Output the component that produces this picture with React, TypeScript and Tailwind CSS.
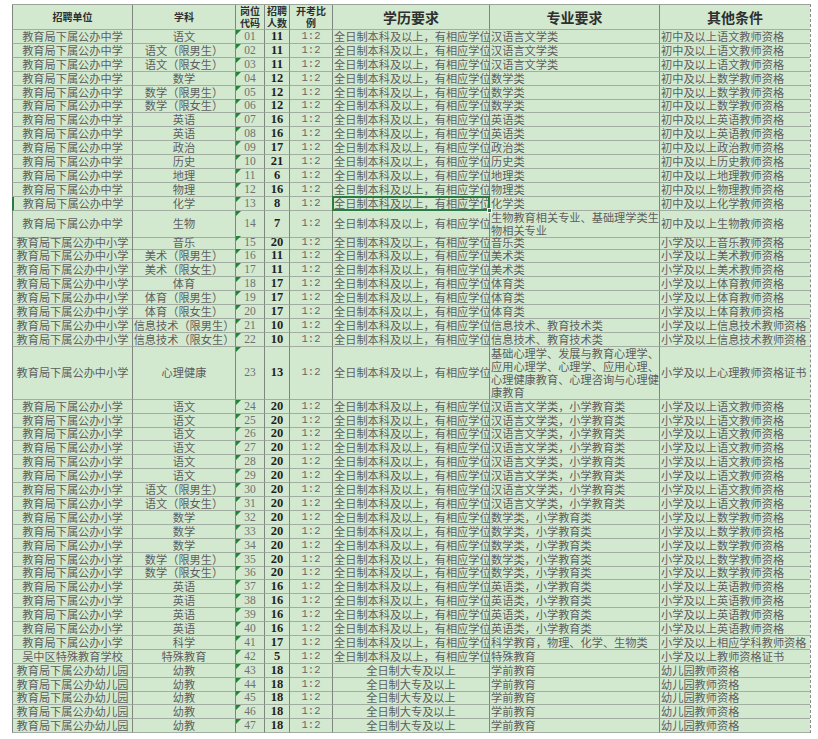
import React from "react";

const cols = "grid grid-cols-[121px_103px_29px_25px_43px_157px_170px_150px]";
const cell = "relative flex items-center whitespace-nowrap border-r border-b border-r-[#7f867f] border-b-[#a2aea2]";
const zh = "font-['Noto_Sans_CJK_SC','Noto_Sans',sans-serif]";

type Row = {
  unit: string;
  subj: string;
  code: string;
  num: string;
  edu: string;
  major: string[];
  other: string;
  h?: string;
  eduCenter?: boolean;
  selected?: boolean;
};

const MS = "教育局下属公办中学";
const MPS = "教育局下属公办中小学";
const PS = "教育局下属公办小学";
const KG = "教育局下属公办幼儿园";
const BK = "全日制本科及以上，有相应学位";

function r(unit: string, subj: string, code: string, num: string, major: string | string[], other: string, extra: Partial<Row> = {}): Row {
  return { unit, subj, code, num, edu: BK, major: Array.isArray(major) ? major : [major], other, ...extra };
}

const rows: Row[] = [
  r(MS, "语文", "01", "11", "汉语言文学类", "初中及以上语文教师资格"),
  r(MS, "语文（限男生）", "02", "11", "汉语言文学类", "初中及以上语文教师资格"),
  r(MS, "语文（限女生）", "03", "11", "汉语言文学类", "初中及以上语文教师资格"),
  r(MS, "数学", "04", "12", "数学类", "初中及以上数学教师资格"),
  r(MS, "数学（限男生）", "05", "12", "数学类", "初中及以上数学教师资格"),
  r(MS, "数学（限女生）", "06", "12", "数学类", "初中及以上数学教师资格"),
  r(MS, "英语", "07", "16", "英语类", "初中及以上英语教师资格"),
  r(MS, "英语", "08", "16", "英语类", "初中及以上英语教师资格"),
  r(MS, "政治", "09", "17", "政治类", "初中及以上政治教师资格"),
  r(MS, "历史", "10", "21", "历史类", "初中及以上历史教师资格"),
  r(MS, "地理", "11", "6", "地理类", "初中及以上地理教师资格"),
  r(MS, "物理", "12", "16", "物理类", "初中及以上物理教师资格"),
  r(MS, "化学", "13", "8", "化学类", "初中及以上化学教师资格", { selected: true }),
  r(MS, "生物", "14", "7", ["生物教育相关专业、基础理学类生", "物相关专业"], "初中及以上生物教师资格", { h: "h-[25px]" }),
  r(MPS, "音乐", "15", "20", "音乐类", "小学及以上音乐教师资格"),
  r(MPS, "美术（限男生）", "16", "11", "美术类", "小学及以上美术教师资格"),
  r(MPS, "美术（限女生）", "17", "11", "美术类", "小学及以上美术教师资格"),
  r(MPS, "体育", "18", "17", "体育类", "小学及以上体育教师资格"),
  r(MPS, "体育（限男生）", "19", "17", "体育类", "小学及以上体育教师资格"),
  r(MPS, "体育（限女生）", "20", "17", "体育类", "小学及以上体育教师资格"),
  r(MPS, "信息技术（限男生）", "21", "10", "信息技术、教育技术类", "小学及以上信息技术教师资格"),
  r(MPS, "信息技术（限女生）", "22", "10", "信息技术、教育技术类", "小学及以上信息技术教师资格"),
  r(
    MPS,
    "心理健康",
    "23",
    "13",
    ["基础心理学、发展与教育心理学、", "应用心理学、心理学、应用心理、", "心理健康教育、心理咨询与心理健", "康教育"],
    "小学及以上心理教师资格证书",
    { h: "h-[53px]" }
  ),
  ...["24", "25", "26", "27", "28", "29"].map((c) => r(PS, "语文", c, "20", "汉语言文学类，小学教育类", "小学及以上语文教师资格")),
  r(PS, "语文（限男生）", "30", "20", "汉语言文学类，小学教育类", "小学及以上语文教师资格"),
  r(PS, "语文（限女生）", "31", "20", "汉语言文学类，小学教育类", "小学及以上语文教师资格"),
  ...["32", "33", "34"].map((c) => r(PS, "数学", c, "20", "数学类，小学教育类", "小学及以上数学教师资格")),
  r(PS, "数学（限男生）", "35", "20", "数学类，小学教育类", "小学及以上数学教师资格"),
  r(PS, "数学（限女生）", "36", "20", "数学类，小学教育类", "小学及以上数学教师资格"),
  ...["37", "38", "39", "40"].map((c) => r(PS, "英语", c, "16", "英语类，小学教育类", "小学及以上英语教师资格")),
  r(PS, "科学", "41", "17", "科学教育，物理、化学、生物类", "小学及以上相应学科教师资格"),
  r("吴中区特殊教育学校", "特殊教育", "42", "5", "特殊教育", "小学及以上教师资格证书"),
  ...["43", "44", "45", "46", "47"].map((c) =>
    r(KG, "幼教", c, "18", "学前教育", "幼儿园教师资格", { edu: "全日制大专及以上", eduCenter: true })
  ),
];

function Header() {
  const small = `${zh} text-[10px] font-bold leading-[12px] text-[#2f2f2f] text-center`;
  const big = `${zh} text-[14px] font-bold leading-[16px] text-[#2f2f2f]`;
  return (
    <div className={`${cols} h-[25px] bg-[#d2e9cf]`}>
      <div className={`${cell} justify-center border-l border-l-[#7f867f]`}>
        <span className={small}>招聘单位</span>
      </div>
      <div className={`${cell} justify-center`}>
        <span className={small}>学科</span>
      </div>
      <div className={`${cell} justify-center`}>
        <span className={small}>
          岗位
          <br />
          代码
        </span>
      </div>
      <div className={`${cell} justify-center`}>
        <span className={small}>
          招聘
          <br />
          人数
        </span>
      </div>
      <div className={`${cell} justify-center items-start`}>
        <span className={small}>
          开考比
          <br />
          例
        </span>
      </div>
      <div className={`${cell} justify-center`}>
        <span className={big}>学历要求</span>
      </div>
      <div className={`${cell} justify-center`}>
        <span className={big}>专业要求</span>
      </div>
      <div className={`${cell} justify-center border-r-0`}>
        <span className={big}>其他条件</span>
      </div>
    </div>
  );
}

function DataRow({ row }: { row: Row }) {
  const text = `${zh} text-[11.2px] leading-[13px] text-[#5e5e5e]`;
  return (
    <div className={`${cols} ${row.h ?? "h-[13.9px]"} bg-[#d2e9cf]`}>
      <div
        className={`${cell} justify-center border-l ${row.selected ? "border-l-2 border-l-[#2c7a44]" : "border-l-[#7f867f]"}`}
      >
        <span className={text}>{row.unit}</span>
      </div>
      <div className={`${cell} justify-center`}>
        <span className={text}>{row.subj}</span>
      </div>
      <div className={`${cell} justify-center`}>
        <span className="absolute left-0 top-0 h-0 w-0 border-t-[5px] border-r-[5px] border-t-[#23843a] border-r-transparent" />
        <span className="font-['Liberation_Serif',serif] text-[11.5px] leading-[13px] text-[#707070]">{row.code}</span>
      </div>
      <div className={`${cell} justify-center`}>
        <span className="font-['Liberation_Serif',serif] text-[12.5px] font-bold leading-[13px] text-[#1f1f1f]">{row.num}</span>
      </div>
      <div className={`${cell} justify-center`}>
        <span className="font-['Liberation_Mono',monospace] text-[10.5px] leading-[13px] text-[#666]">1:2</span>
      </div>
      <div className={`${cell} ${row.eduCenter ? "justify-center" : "justify-start pl-[1px]"}`}>
        <span className={text}>{row.edu}</span>
        {row.selected && (
          <>
            <span className="absolute -left-[1px] -top-[1px] -right-[1px] -bottom-[1px] z-10 border-2 border-[#2c7a44]" />
            <span className="absolute -bottom-[3px] -right-[3px] z-20 h-[5px] w-[5px] border border-white bg-[#2c7a44]" />
          </>
        )}
      </div>
      <div className={`${cell} justify-start pl-[1px]`}>
        <span className={text}>
          {row.major.map((m, i) => (
            <React.Fragment key={i}>
              {i > 0 && <br />}
              {m}
            </React.Fragment>
          ))}
        </span>
      </div>
      <div className={`${cell} justify-start pl-[1px] border-r-0`}>
        <span className={text}>{row.other}</span>
      </div>
    </div>
  );
}

export default function App() {
  return (
    <div className="h-[739px] w-[818px] overflow-hidden bg-white pt-[4px]">
      <div className="ml-[12px] w-[799px] border-r border-dashed border-[#8a8a8a]">
        <div className="border-t border-t-[#9aa59a]">
          <Header />
          {rows.map((row, i) => (
            <DataRow key={i} row={row} />
          ))}
        </div>
      </div>
    </div>
  );
}
